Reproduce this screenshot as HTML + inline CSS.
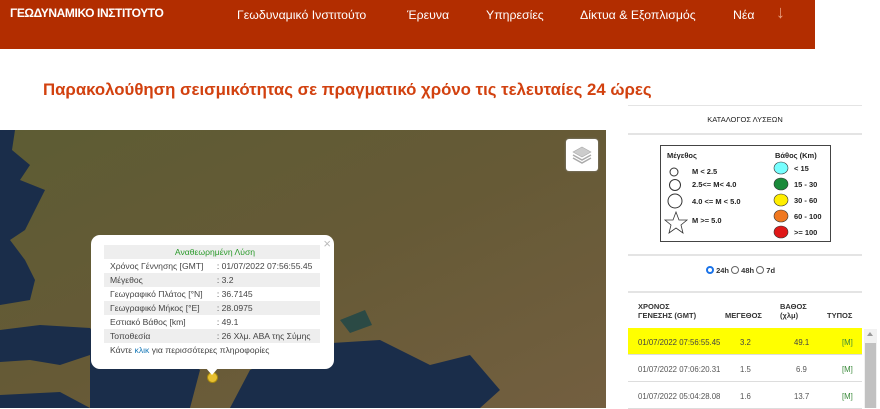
<!DOCTYPE html>
<html><head><meta charset="utf-8"><style>
*{margin:0;padding:0;box-sizing:border-box}
body{width:880px;height:408px;overflow:hidden;background:#fff;font-family:"Liberation Sans",sans-serif;position:relative}
.hdr{position:absolute;left:0;top:0;width:815px;height:49px;background:#b22d00;color:#fff}
.hdr span{position:absolute;top:8px;font-size:12.3px}
.title{position:absolute;left:43px;top:80px;font-size:16.8px;color:#d2410f;font-weight:bold}
.map{position:absolute;left:0;top:130px;width:606px;height:278px;overflow:hidden;background:#625a36}
.pop{position:absolute;left:91px;top:235px;width:243px;height:134px;background:#fff;border-radius:9px;font-size:8.6px;color:#444}
.pop table{position:absolute;left:13px;top:10px;border-collapse:collapse;width:216px}
.pop td{height:14px;padding:0 0 0 6px;white-space:nowrap}
.pop tr.g td{background:#eee}
.tip{position:absolute;left:205px;top:367px;width:0;height:0;border-left:7px solid transparent;border-right:7px solid transparent;border-top:8px solid #fff}
.rp{position:absolute;left:628px;width:234px;border-top:2px solid #e4e4e4}
.small{font-size:8px;color:#222}
.tbl{position:absolute;left:628px;top:292px;width:234px;font-size:7.8px;color:#555}
.row{position:absolute;left:0;width:234px;height:27px;border-bottom:1px solid #ddd}
.row span{position:absolute;top:10px}
</style></head><body>
<div class="hdr">
<span style="left:10px;font-weight:bold;font-size:12px;top:6px;letter-spacing:-0.4px">ΓΕΩΔΥΝΑΜΙΚΟ ΙΝΣΤΙΤΟΥΤΟ</span>
<span style="left:237px">Γεωδυναμικό Ινστιτούτο</span>
<span style="left:407px">Έρευνα</span>
<span style="left:486px">Υπηρεσίες</span>
<span style="left:580px">Δίκτυα &amp; Εξοπλισμός</span>
<span style="left:733px">Νέα</span>
<span style="left:776px;font-size:18px;top:2px;color:#e8a080">↓</span>
</div>
<div class="title">Παρακολούθηση σεισμικότητας σε πραγματικό χρόνο τις τελευταίες 24 ώρες</div>

<div class="map">
<svg width="606" height="278" style="position:absolute;left:0;top:0">
<defs><linearGradient id="l" x1="0" y1="0" x2="1" y2="1"><stop offset="0" stop-color="#5d5c34"/><stop offset="0.5" stop-color="#665a36"/><stop offset="1" stop-color="#735f40"/></linearGradient></defs>
<rect width="606" height="278" fill="url(#l)"/>
<path d="M0 0 L15 0 L12 20 L30 35 L20 50 L45 60 L35 80 L25 100 L10 110 L25 130 L35 150 L30 170 L0 175 Z" fill="#1a2d4a"/>
<path d="M0 200 L40 195 L90 198 L100 210 L90 225 L60 235 L30 230 L0 232 Z" fill="#1a2d4a"/>
<path d="M90 215 L180 220 L200 240 L190 278 L90 278 Z" fill="#1a2d4a"/>
<path d="M0 265 L60 262 L90 278 L0 278 Z" fill="#1a2d4a"/>
<path d="M250 240 L300 215 L380 210 L430 235 L470 225 L500 260 L480 278 L230 278 Z" fill="#1a2d4a"/>
<path d="M340 190 L365 180 L372 195 L350 203 Z" fill="#2b4a45"/>
</svg>
<div style="position:absolute;left:566px;top:9px;width:32px;height:32px;background:#fff;border-radius:3px;box-shadow:0 0 2px #888">
<svg width="32" height="32"><path d="M16 8 L25 13 L16 18 L7 13Z" fill="#ccc" stroke="#aaa" stroke-width=".6"/><path d="M7 16 L16 21 L25 16" fill="none" stroke="#aaa" stroke-width="1.5"/><path d="M7 19 L16 24 L25 19" fill="none" stroke="#aaa" stroke-width="1.5"/></svg>
</div>
<div style="position:absolute;left:207px;top:242px;width:11px;height:11px;border-radius:50%;background:#e8c030;border:1px solid #a88a10"></div>
</div>

<div class="pop">
<span style="position:absolute;right:3px;top:1px;color:#bbb;font-size:13px">×</span>
<table>
<tr class="g"><td colspan="2" style="text-align:center;color:#2a9a2a">Αναθεωρημένη Λύση</td></tr>
<tr><td>Χρόνος Γέννησης [GMT]</td><td>: 01/07/2022 07:56:55.45</td></tr>
<tr class="g"><td>Μέγεθος</td><td>: 3.2</td></tr>
<tr><td>Γεωγραφικό Πλάτος [°N]</td><td>: 36.7145</td></tr>
<tr class="g"><td>Γεωγραφικό Μήκος [°E]</td><td>: 28.0975</td></tr>
<tr><td>Εστιακό Βάθος [km]</td><td>: 49.1</td></tr>
<tr class="g"><td>Τοποθεσία</td><td>: 26 Χλμ. ΑΒΑ της Σύμης</td></tr>
<tr><td colspan="2">Κάντε <span style="color:#1a7ab8">κλικ</span> για περισσότερες πληροφορίες</td></tr>
</table>
</div>
<div class="tip"></div>

<div class="rp" style="top:105px;border-top-width:1px"></div>
<div class="small" style="position:absolute;left:628px;width:234px;top:115px;text-align:center;font-size:7.5px">ΚΑΤΑΛΟΓΟΣ ΛΥΣΕΩΝ</div>
<div class="rp" style="top:133px"></div>
<div style="position:absolute;left:660px;top:145px;width:171px;height:97px;border:1.5px solid #444;font-size:7.5px;font-weight:bold;color:#222">
<span style="position:absolute;left:6px;top:5px">Μέγεθος</span>
<span style="position:absolute;left:114px;top:5px">Βάθος (Km)</span>
<svg width="171" height="97" style="position:absolute;left:0;top:0">
<circle cx="13" cy="26" r="4" fill="none" stroke="#333"/>
<circle cx="14" cy="39" r="5.5" fill="none" stroke="#333"/>
<circle cx="14" cy="55" r="7" fill="none" stroke="#333"/>
<path d="M15 66 L18 74 L26 74 L20 79 L22 87 L15 82 L8 87 L10 79 L4 74 L12 74Z" fill="none" stroke="#333" stroke-width=".8"/>
<ellipse cx="120" cy="22" rx="7" ry="6" fill="#7ff" stroke="#333" stroke-width=".6"/>
<ellipse cx="120" cy="38" rx="7" ry="6" fill="#1a8a3a" stroke="#333" stroke-width=".6"/>
<ellipse cx="120" cy="54" rx="7" ry="6" fill="#ffee00" stroke="#333" stroke-width=".6"/>
<ellipse cx="120" cy="70" rx="7" ry="6" fill="#f07820" stroke="#333" stroke-width=".6"/>
<ellipse cx="120" cy="86" rx="7" ry="6" fill="#e01818" stroke="#333" stroke-width=".6"/>
</svg>
<span style="position:absolute;left:31px;top:21px">M &lt; 2.5</span>
<span style="position:absolute;left:31px;top:34px">2.5&lt;= M&lt; 4.0</span>
<span style="position:absolute;left:31px;top:51px">4.0 &lt;= M &lt; 5.0</span>
<span style="position:absolute;left:31px;top:70px">M &gt;= 5.0</span>
<span style="position:absolute;left:133px;top:18px">&lt; 15</span>
<span style="position:absolute;left:133px;top:34px">15 - 30</span>
<span style="position:absolute;left:133px;top:50px">30 - 60</span>
<span style="position:absolute;left:133px;top:66px">60 - 100</span>
<span style="position:absolute;left:133px;top:82px">&gt;= 100</span>
</div>
<div class="rp" style="top:254px"></div>
<div style="position:absolute;left:706px;top:266px;font-size:7.5px;font-weight:bold;color:#333">
<span style="display:inline-block;width:8px;height:8px;border-radius:50%;border:2.5px solid #1a73e8;vertical-align:-1px"></span> 24h
<span style="display:inline-block;width:8px;height:8px;border-radius:50%;border:1px solid #666;vertical-align:-1px"></span> 48h
<span style="display:inline-block;width:8px;height:8px;border-radius:50%;border:1px solid #666;vertical-align:-1px"></span> 7d
</div>
<div class="rp" style="top:291px"></div>
<div class="tbl">
<div style="position:absolute;left:10px;top:10px;font-weight:bold;color:#333;font-size:7.5px;line-height:9px">ΧΡΟΝΟΣ<br>ΓΕΝΕΣΗΣ (GMT)</div>
<div style="position:absolute;left:97px;top:19px;font-weight:bold;color:#333;font-size:7.5px">ΜΕΓΕΘΟΣ</div>
<div style="position:absolute;left:152px;top:10px;font-weight:bold;color:#333;font-size:7.5px;line-height:9px">ΒΑΘΟΣ<br>(χλμ)</div>
<div style="position:absolute;left:199px;top:19px;font-weight:bold;color:#333;font-size:7.5px">ΤΥΠΟΣ</div>
<div class="row" style="top:36px;background:#ffff00;color:#444"><span style="left:10px">01/07/2022 07:56:55.45</span><span style="left:112px">3.2</span><span style="left:166px">49.1</span><span style="left:214px;color:#3a8a3a">[M]</span></div>
<div class="row" style="top:63px"><span style="left:10px">01/07/2022 07:06:20.31</span><span style="left:112px">1.5</span><span style="left:168px">6.9</span><span style="left:214px;color:#3a8a3a">[M]</span></div>
<div class="row" style="top:90px"><span style="left:10px">01/07/2022 05:04:28.08</span><span style="left:112px">1.6</span><span style="left:166px">13.7</span><span style="left:214px;color:#3a8a3a">[M]</span></div>
</div>
<div style="position:absolute;left:864px;top:329px;width:13px;height:79px;background:#f1f1f1">
<div style="position:absolute;left:3px;top:3px;border-left:3px solid transparent;border-right:3px solid transparent;border-bottom:4px solid #999"></div>
<div style="position:absolute;left:1px;top:14px;width:11px;height:65px;background:#c1c1c1"></div>
</div>
</body></html>
